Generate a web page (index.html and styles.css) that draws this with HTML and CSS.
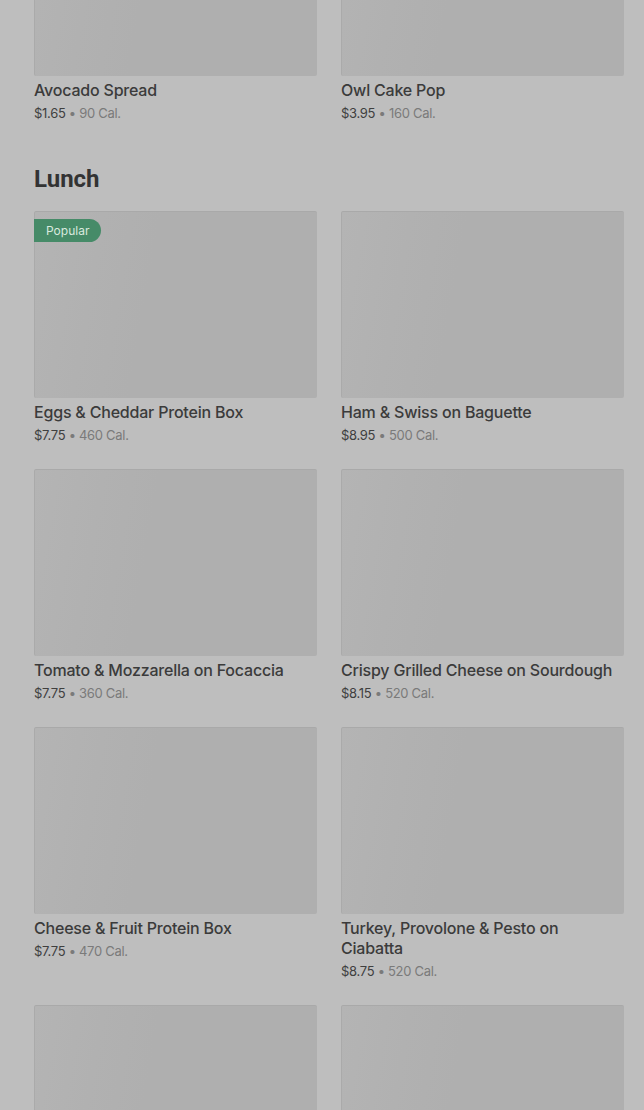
FILE: index.html
```html
<!DOCTYPE html>
<html lang="en">
<head>
  <meta charset="UTF-8" />
  <meta name="viewport" content="width=device-width, initial-scale=1.0"/>
  <title>Menu</title>
  <link rel="stylesheet" href="styles.css">
</head>
<body>

  <div class="menu">

    <div class="grid grid-top">
      <div class="item">
        <div class="thumb"></div>
        <div class="item-name">Avocado Spread</div>
        <div class="item-info"><span class="price">$1.65</span> • 90 Cal.</div>
      </div>
      <div class="item">
        <div class="thumb"></div>
        <div class="item-name">Owl Cake Pop</div>
        <div class="item-info"><span class="price">$3.95</span> • 160 Cal.</div>
      </div>
    </div>

    <h2 class="section-title">Lunch</h2>

    <div class="grid">
      <div class="item">
        <div class="thumb">
          <span class="badge">Popular</span>
        </div>
        <div class="item-name">Eggs &amp; Cheddar Protein Box</div>
        <div class="item-info"><span class="price">$7.75</span> • 460 Cal.</div>
      </div>
      <div class="item">
        <div class="thumb"></div>
        <div class="item-name">Ham &amp; Swiss on Baguette</div>
        <div class="item-info"><span class="price">$8.95</span> • 500 Cal.</div>
      </div>
      <div class="item">
        <div class="thumb"></div>
        <div class="item-name">Tomato &amp; Mozzarella on Focaccia</div>
        <div class="item-info"><span class="price">$7.75</span> • 360 Cal.</div>
      </div>
      <div class="item">
        <div class="thumb"></div>
        <div class="item-name">Crispy Grilled Cheese on Sourdough</div>
        <div class="item-info"><span class="price">$8.15</span> • 520 Cal.</div>
      </div>
      <div class="item">
        <div class="thumb"></div>
        <div class="item-name">Cheese &amp; Fruit Protein Box</div>
        <div class="item-info"><span class="price">$7.75</span> • 470 Cal.</div>
      </div>
      <div class="item">
        <div class="thumb"></div>
        <div class="item-name">Turkey, Provolone &amp; Pesto on Ciabatta</div>
        <div class="item-info"><span class="price">$8.75</span> • 520 Cal.</div>
      </div>
      <div class="item">
        <div class="thumb"></div>
      </div>
      <div class="item">
        <div class="thumb"></div>
      </div>
    </div>

  </div>

</body>
</html>
```

FILE: styles.css
```css
* {
  box-sizing: border-box;
  margin: 0;
  padding: 0;
}

html, body {
  height: 100%;
  overflow: hidden;
}

body {
  background-color: #bebebe;
  font-family: Inter, Roboto, sans-serif;
  color: #3a3a3a;
}

.menu {
  padding: 0 20px 0 34px;
}

.grid {
  display: grid;
  grid-template-columns: 1fr 1fr;
  column-gap: 24px;
  row-gap: 24px;
}

.grid-top {
  margin-top: -111px;
}

.thumb {
  position: relative;
  height: 187px;
  background: linear-gradient(100deg, #b4b4b4 0%, #b1b1b1 22%, #afafaf 40%, #afafaf 100%);
  border-top: 1px solid #a9a9a9;
  border-left: 1px solid #aaaaaa;
  border-radius: 2px;
}

.badge {
  position: absolute;
  top: 7px;
  left: -1px;
  height: 23px;
  padding: 0 12px;
  line-height: 23px;
  font-size: 12px;
  color: #d9e9df;
  background-color: #468b68;
  border-radius: 0 12px 12px 0;
}

.item-name {
  margin-top: 4px;
  font-size: 16px;
  line-height: 20px;
  font-weight: 500;
  letter-spacing: -0.2px;
  color: #3b3b3b;
}

.item-info {
  margin-top: 3px;
  font-size: 13px;
  line-height: 20px;
  letter-spacing: -0.3px;
  color: #7a7a7a;
}

.price {
  color: #3f3f3f;
}

.section-title {
  margin: 41px 0 17px;
  font-family: Roboto, sans-serif;
  font-size: 24px;
  line-height: 30px;
  font-weight: 700;
  color: #333;
}
```
